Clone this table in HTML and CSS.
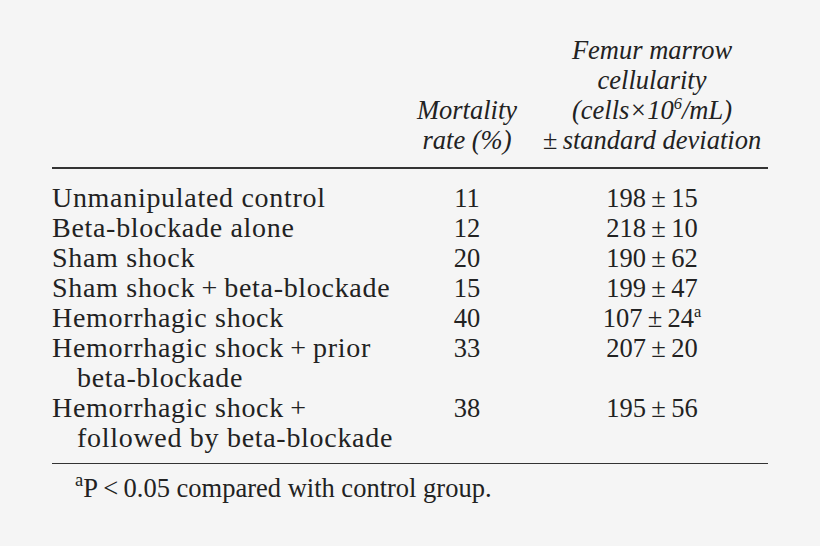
FILE: index.html
```html
<!DOCTYPE html>
<html>
<head>
<meta charset="utf-8">
<link rel="stylesheet" href="styles.css">
</head>
<body>
<div class="page">
  <div class="grid head">
    <div class="c1"></div>
    <div class="c2 hd">Mortality<br>rate (%)</div>
    <div class="c3 hd">Femur marrow<br>cellularity<br>(cells×10<sup>6</sup>/mL)<br>±&#8201;standard deviation</div>
  </div>
  <div class="rule"></div>
  <div class="grid body">
    <div class="c1">Unmanipulated control</div><div class="c2">11</div><div class="c3">198&#8201;±&#8201;15</div>
    <div class="c1">Beta-blockade alone</div><div class="c2">12</div><div class="c3">218&#8201;±&#8201;10</div>
    <div class="c1">Sham shock</div><div class="c2">20</div><div class="c3">190&#8201;±&#8201;62</div>
    <div class="c1">Sham shock&#8201;+&#8201;beta-blockade</div><div class="c2">15</div><div class="c3">199&#8201;±&#8201;47</div>
    <div class="c1">Hemorrhagic shock</div><div class="c2">40</div><div class="c3">107&#8201;±&#8201;24<sup>a</sup></div>
    <div class="c1">Hemorrhagic shock&#8201;+&#8201;prior<br><span class="ind">beta-blockade</span></div><div class="c2">33</div><div class="c3">207&#8201;±&#8201;20</div>
    <div class="c1">Hemorrhagic shock&#8201;+<br><span class="ind">followed by beta-blockade</span></div><div class="c2">38</div><div class="c3">195&#8201;±&#8201;56</div>
  </div>
  <div class="rule"></div>
  <p class="note"><sup>a</sup>P&#8201;&lt;&#8201;0.05 compared with control group.</p>
</div>
</body>
</html>
```
FILE: styles.css
```css
html, body {
  margin: 0;
  padding: 0;
  background: #f5f5f5;
}
.page {
  width: 716px;
  margin-left: 52px;
  padding-top: 35px;
  font-family: "Liberation Serif", "Times New Roman", serif;
  font-size: 26.5px;
  line-height: 30px;
  color: #222;
}
.grid {
  display: grid;
  grid-template-columns: 363px 104px 1fr;
}
.head {
  padding-bottom: 12px;
  align-items: end;
}
.hd {
  font-style: italic;
  font-size: 26.5px;
  text-align: center;
}
.body .c1 {
  font-size: 28px;
  letter-spacing: 0.7px;
}
.c2 { text-align: center; }
.c3 { text-align: center; padding-left: 17px; }
.body { padding-top: 14px; padding-bottom: 10px; }
.ind { padding-left: 25px; }
.rule {
  height: 1.5px;
  background: #333;
}
sup {
  font-size: 0.62em;
  line-height: 0;
  vertical-align: 0.62em;
}
.note {
  margin: 0;
  padding: 9px 0 0 23px;
  font-size: 26.5px;
}
.note sup {
  font-size: 0.7em;
}
```
